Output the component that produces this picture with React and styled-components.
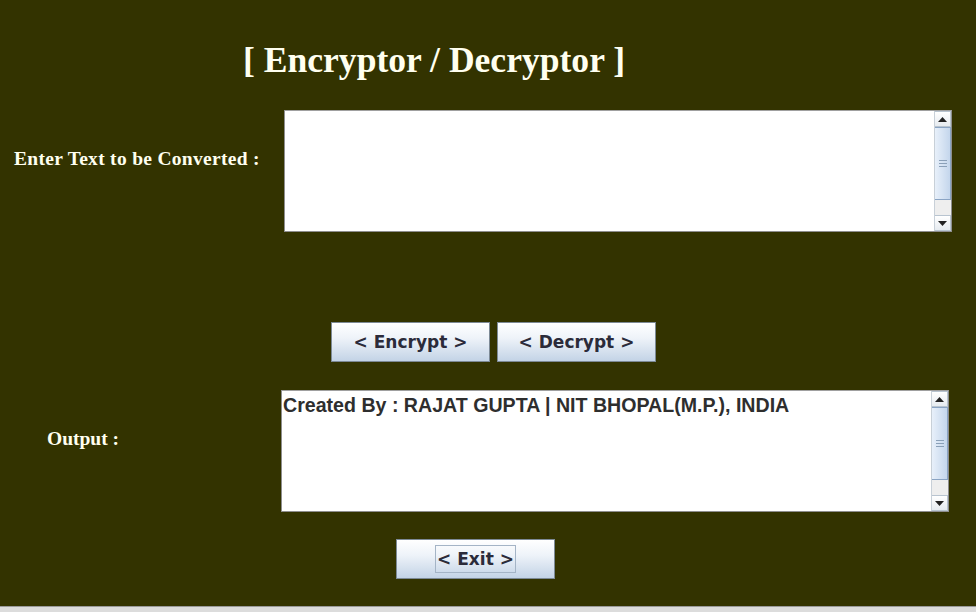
import React from 'react'
import styled, { createGlobalStyle } from 'styled-components'

const GlobalStyle = createGlobalStyle`
  html, body {
    margin: 0;
    padding: 0;
    overflow: hidden;
    background: #333300;
  }
`

const Frame = styled.div`
  width: 976px;
  height: 612px;
  background: #333300;
  display: flex;
  flex-direction: column;
`

const Title = styled.h1`
  margin: 42px 0 0 243px;
  font-family: 'Liberation Serif', 'Times New Roman', serif;
  font-weight: bold;
  font-size: 35.6px;
  line-height: 36px;
  color: #fffff0;
  white-space: nowrap;
`

const FieldRow = styled.div`
  display: flex;
  align-items: flex-start;
  margin-top: ${({ top }) => top}px;
`

const Label = styled.div`
  width: ${({ width }) => width}px;
  box-sizing: border-box;
  padding: 38px 0 0 ${({ indent }) => indent}px;
  font-family: 'Liberation Serif', 'Times New Roman', serif;
  font-weight: bold;
  font-size: 19.5px;
  letter-spacing: ${({ spacing = 0 }) => spacing}px;
  line-height: 22px;
  color: #fffff0;
  white-space: nowrap;
`

const TextBox = styled.div`
  width: 668px;
  height: 122px;
  box-sizing: border-box;
  background: #ffffff;
  border: 1px solid #8e8e8e;
  border-top-color: #a0a0a0;
  display: flex;
`

const TextContent = styled.div`
  flex: 1;
  padding: 3px 1px;
  font-family: 'Liberation Sans', Arial, sans-serif;
  font-weight: bold;
  font-size: 19.6px;
  line-height: 23px;
  color: #2e2e2e;
  white-space: nowrap;
`

const ScrollBar = styled.div`
  width: 16px;
  display: flex;
  flex-direction: column;
  border-left: 1px solid #c8d0d8;
  background: #eeeeee;
`

const ArrowButton = styled.div`
  height: 16px;
  box-sizing: border-box;
  display: flex;
  align-items: center;
  justify-content: center;
  background: linear-gradient(#ffffff, #e6ebf0);
  border: 1px solid #b8c4d0;
  border-left: none;
`

const Thumb = styled.div`
  height: 73px;
  box-sizing: border-box;
  display: flex;
  flex-direction: column;
  align-items: center;
  justify-content: center;
  gap: 2px;
  background: linear-gradient(90deg, #e8f0fa, #c4d6ec);
  border: 1px solid #8aa4c4;
  border-left: none;
`

const Grip = styled.span`
  width: 8px;
  height: 1px;
  background: #8aa0b8;
`

const Track = styled.div`
  flex: 1;
  background: #eeeeee;
`

const ButtonRow = styled.div`
  display: flex;
  gap: 7px;
  margin: ${({ top }) => top}px 0 0 ${({ left }) => left}px;
`

const Button = styled.button`
  width: 159px;
  height: 40px;
  box-sizing: border-box;
  padding: 0;
  display: flex;
  align-items: center;
  justify-content: center;
  border: 1px solid #7d8a96;
  background: linear-gradient(#ffffff 0%, #eef3f9 40%, #c3d3e6 100%);
  font-family: 'DejaVu Sans', Verdana, sans-serif;
  font-weight: bold;
  font-size: 17px;
  color: #2b2b3a;
  cursor: pointer;
`

const FocusRing = styled.span`
  padding: 3px 1px;
  border: 1px solid #a4b4c6;
  line-height: 20px;
`

const BottomStrip = styled.div`
  margin-top: auto;
  height: 5px;
  background: #dcdcdc;
  border-top: 1px solid #9a9a9a;
`

const Arrow = ({ down }) => (
  <svg width="9" height="5" viewBox="0 0 9 5">
    <path d={down ? 'M0 0H9L4.5 5Z' : 'M0 5H9L4.5 0Z'} fill="#222" />
  </svg>
)

const ScrollArea = ({ children }) => (
  <TextBox>
    <TextContent>{children}</TextContent>
    <ScrollBar>
      <ArrowButton>
        <Arrow />
      </ArrowButton>
      <Thumb>
        <Grip />
        <Grip />
        <Grip />
      </Thumb>
      <Track />
      <ArrowButton>
        <Arrow down />
      </ArrowButton>
    </ScrollBar>
  </TextBox>
)

export default function App() {
  return (
    <Frame>
      <GlobalStyle />
      <Title>[ Encryptor / Decryptor ]</Title>
      <FieldRow top={32}>
        <Label width={284} indent={14} spacing={0.3}>
          Enter Text to be Converted :
        </Label>
        <ScrollArea />
      </FieldRow>
      <ButtonRow top={90} left={331}>
        <Button>&lt; Encrypt &gt;</Button>
        <Button>&lt; Decrypt &gt;</Button>
      </ButtonRow>
      <FieldRow top={28}>
        <Label width={281} indent={47}>
          Output :
        </Label>
        <ScrollArea>Created By : RAJAT GUPTA | NIT BHOPAL(M.P.), INDIA</ScrollArea>
      </FieldRow>
      <ButtonRow top={27} left={396}>
        <Button>
          <FocusRing>&lt; Exit &gt;</FocusRing>
        </Button>
      </ButtonRow>
      <BottomStrip />
    </Frame>
  )
}
